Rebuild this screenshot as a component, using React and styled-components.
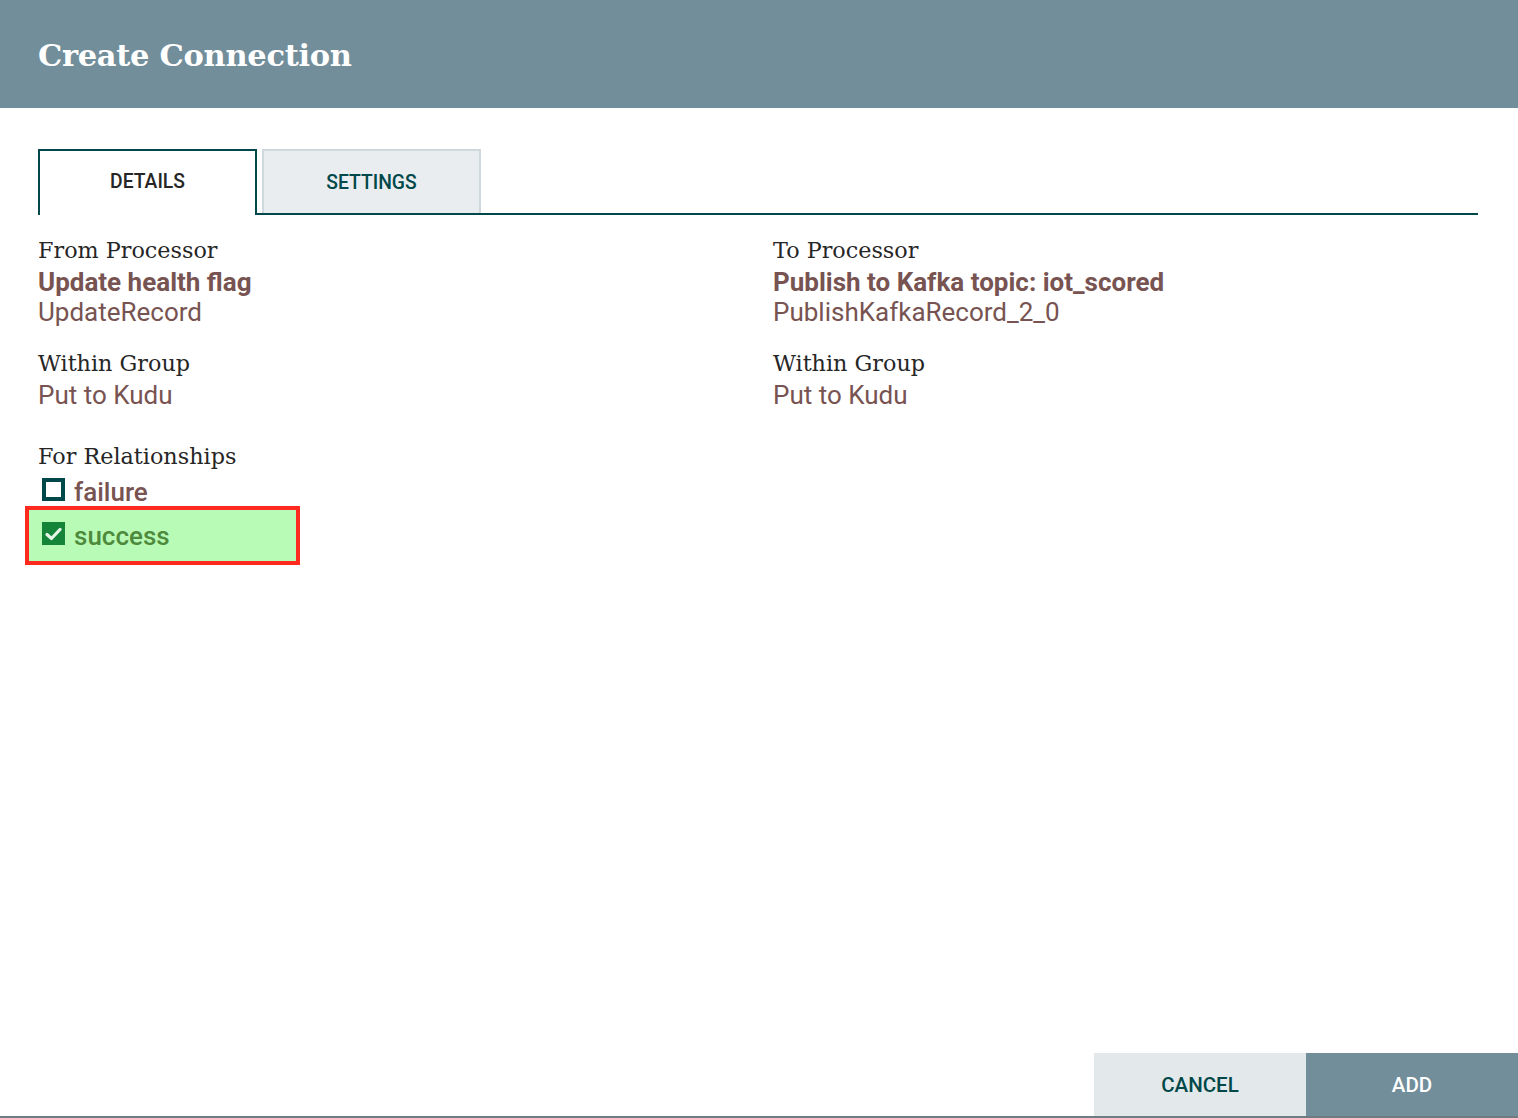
import React from 'react'
import styled, { createGlobalStyle } from 'styled-components'

const GlobalStyle = createGlobalStyle`
	html, body {
		margin: 0;
		padding: 0;
		background: #ffffff;
	}
	body {
		font-family: Roboto, "Liberation Sans", sans-serif;
	}
`

const from = {
	label: 'From Processor',
	name: 'Update health flag',
	type: 'UpdateRecord',
	group: 'Put to Kudu',
}

const to = {
	label: 'To Processor',
	name: 'Publish to Kafka topic: iot_scored',
	type: 'PublishKafkaRecord_2_0',
	group: 'Put to Kudu',
}

const relationships = [
	{ name: 'failure', checked: false },
	{ name: 'success', checked: true, highlighted: true },
]

const Check = ({ checked }) => (
	<Box checked={checked}>
		{checked && (
			<svg width="17" height="14" viewBox="0 0 17 14">
				<path d="M2 7.5 L6.5 11.5 L15 2.5" fill="none" stroke="#e6f5e6" strokeWidth="3.2" strokeLinecap="round" strokeLinejoin="round" />
			</svg>
		)}
	</Box>
)

const Endpoint = ({ data }) => (
	<Column>
		<Label>{data.label}</Label>
		<Value bold>{data.name}</Value>
		<Value>{data.type}</Value>
		<Spacer />
		<Label>Within Group</Label>
		<Value>{data.group}</Value>
	</Column>
)

const App = () => {
	return (
		<Page>
			<GlobalStyle />
			<Header>
				<Title>Create Connection</Title>
			</Header>
			<Body>
				<Tabs>
					<Tab active>DETAILS</Tab>
					<Tab>SETTINGS</Tab>
				</Tabs>
				<Columns>
					<Endpoint data={from} />
					<Endpoint data={to} />
				</Columns>
				<Relationships>
					<Label>For Relationships</Label>
					{relationships.map(r => (
						<Relation key={r.name} highlighted={r.highlighted}>
							<Check checked={r.checked} />
							<RelName checked={r.checked}>{r.name}</RelName>
						</Relation>
					))}
				</Relationships>
			</Body>
			<Footer>
				<Button>CANCEL</Button>
				<Button primary>ADD</Button>
			</Footer>
		</Page>
	)
}

export default App

const Page = styled.div`
	height: 1118px;
	display: flex;
	flex-direction: column;
	box-sizing: border-box;
	border-bottom: 2px solid #6f7d83;
`
const Header = styled.div`
	height: 108px;
	background: #728e9b;
	display: flex;
	align-items: center;
	padding-left: 38px;
	box-sizing: border-box;
`
const Title = styled.h1`
	margin: 0;
	margin-top: 2px;
	color: #ffffff;
	font-family: "DejaVu Serif", "Liberation Serif", serif;
	font-weight: bold;
	font-size: 30.5px;
	letter-spacing: -0.3px;
`
const Body = styled.div`
	flex: 1;
	padding: 41px 40px 0 38px;
`
const Tabs = styled.div`
	display: flex;
	gap: 5px;
	border-bottom: 2px solid #004849;
	height: 64px;
`
const Tab = styled.div`
	width: 219px;
	box-sizing: border-box;
	display: flex;
	align-items: center;
	justify-content: center;
	font-size: 19.3px;
	font-weight: 500;
	height: ${p => (p.active ? '66px' : '64px')};
	color: ${p => (p.active ? '#262626' : '#004849')};
	background: ${p => (p.active ? '#ffffff' : '#e9edf0')};
	border: 2px solid ${p => (p.active ? '#004849' : '#cfd9dd')};
	border-bottom: none;
	padding-bottom: ${p => (p.active ? '4px' : '0')};
`
const Columns = styled.div`
	display: grid;
	grid-template-columns: 735px 1fr;
	margin-top: 19px;
`
const Column = styled.div`
	display: flex;
	flex-direction: column;
`
const Label = styled.div`
	font-family: "DejaVu Serif", "Liberation Serif", serif;
	font-size: 22.3px;
	color: #262626;
	line-height: 33px;
`
const Value = styled.div`
	font-size: 26px;
	line-height: 30px;
	color: #775351;
	font-weight: ${p => (p.bold ? 700 : 400)};
`
const Spacer = styled.div`
	height: 20px;
`
const Relationships = styled.div`
	margin-top: 30px;
	display: flex;
	flex-direction: column;
	align-items: flex-start;
`
const Relation = styled.div`
	display: flex;
	align-items: flex-start;
	gap: 9px;
	height: 33px;
	padding: 3px 0 0 4px;
	box-sizing: border-box;
	${p => p.highlighted && `
		margin-left: -13px;
		padding: 10px 0 0 13px;
		width: 275px;
		height: 59px;
		background: #b8fbb7;
		border: 4px solid #ff2a1f;
	`}
`
const Box = styled.div`
	width: 23px;
	height: 23px;
	margin-top: 2px;
	box-sizing: border-box;
	display: flex;
	align-items: center;
	justify-content: center;
	background: ${p => (p.checked ? '#138438' : '#ffffff')};
	border: ${p => (p.checked ? 'none' : '4px solid #004849')};
`
const RelName = styled.span`
	font-size: 26px;
	line-height: 33px;
	color: ${p => (p.checked ? '#4e8a3c' : '#775351')};
	font-weight: 500;
`
const Footer = styled.div`
	display: flex;
	justify-content: flex-end;
`
const Button = styled.button`
	width: 212px;
	height: 63px;
	border: none;
	margin: 0;
	font-family: Roboto, "Liberation Sans", sans-serif;
	font-size: 20.5px;
	font-weight: 500;
	background: ${p => (p.primary ? '#728e9b' : '#e3e8eb')};
	color: ${p => (p.primary ? '#ffffff' : '#004849')};
	cursor: pointer;
`
